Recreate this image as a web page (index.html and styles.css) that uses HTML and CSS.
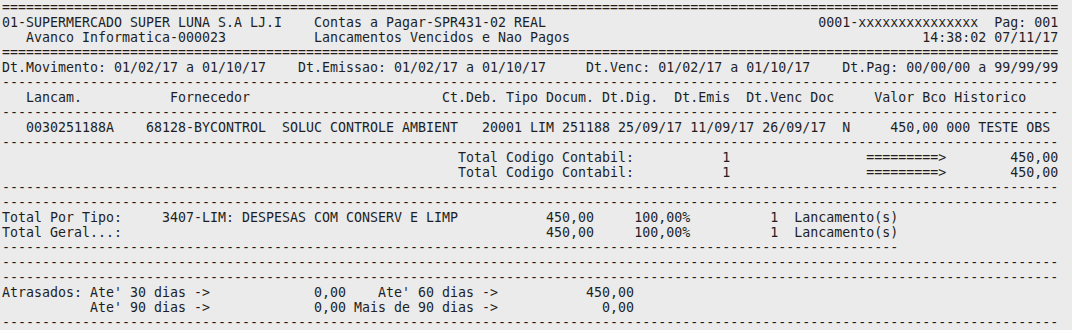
FILE: index.html
```html
<!DOCTYPE html>
<html lang="pt">
<head>
<meta charset="utf-8">
<title>Contas a Pagar-SPR431-02</title>
<link rel="stylesheet" href="styles.css">
</head>
<body>
<pre class="report"><span class="section header">====================================================================================================================================
01-SUPERMERCADO SUPER LUNA S.A LJ.I    Contas a Pagar-SPR431-02 REAL                                  0001-xxxxxxxxxxxxxxx  Pag: 001
   Avanco Informatica-000023           Lancamentos Vencidos e Nao Pagos                                            14:38:02 07/11/17
====================================================================================================================================
Dt.Movimento: 01/02/17 a 01/10/17    Dt.Emissao: 01/02/17 a 01/10/17     Dt.Venc: 01/02/17 a 01/10/17    Dt.Pag: 00/00/00 a 99/99/99
</span><span class="section table">------------------------------------------------------------------------------------------------------------------------------------
   Lancam.           Fornecedor                        Ct.Deb. Tipo Docum. Dt.Dig.  Dt.Emis  Dt.Venc Doc     Valor Bco Historico
------------------------------------------------------------------------------------------------------------------------------------
   0030251188A    68128-BYCONTROL  SOLUC CONTROLE AMBIENT   20001 LIM 251188 25/09/17 11/09/17 26/09/17  N     450,00 000 TESTE OBS
------------------------------------------------------------------------------------------------------------------------------------
                                                         Total Codigo Contabil:           1                 =========>        450,00
                                                         Total Codigo Contabil:           1                 =========>        450,00
------------------------------------------------------------------------------------------------------------------------------------
</span><span class="section totals">------------------------------------------------------------------------------------------------------------------------------------
Total Por Tipo:     3407-LIM: DESPESAS COM CONSERV E LIMP           450,00     100,00%          1  Lancamento(s)
Total Geral...:                                                     450,00     100,00%          1  Lancamento(s)
----------------------------------------------------------------------------------------------------------------
------------------------------------------------------------------------------------------------------------------------------------
</span><span class="section late">------------------------------------------------------------------------------------------------------------------------------------
Atrasados: Ate' 30 dias ->             0,00    Ate' 60 dias ->           450,00
           Ate' 90 dias ->             0,00 Mais de 90 dias ->             0,00
------------------------------------------------------------------------------------------------------------------------------------</span></pre>
</body>
</html>
```
FILE: styles.css
```css
html, body {
  margin: 0;
  padding: 0;
  background: #ebebeb;
}

body {
  width: 1072px;
  height: 330px;
  overflow: hidden;
}

.report {
  margin: 0;
  padding: 0 0 0 2px;
  font-family: "DejaVu Sans Mono", monospace;
  font-size: 13.27px;
  letter-spacing: 0.015px;
  line-height: 15px;
  color: #1e1e24;
  white-space: pre;
}

.section {
  display: block;
}
```
